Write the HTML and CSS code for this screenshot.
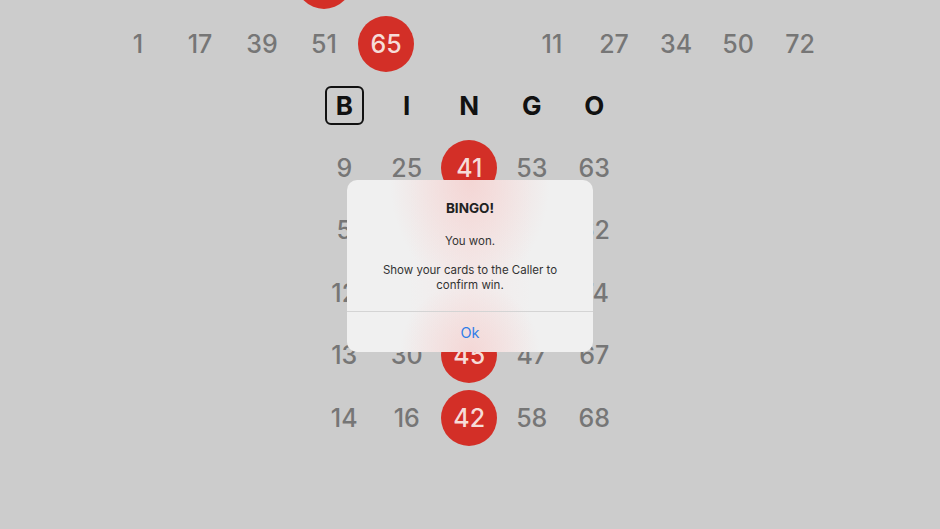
FILE: index.html
```html
<!DOCTYPE html>
<html>
	<head>
		<meta http-equiv="content-type" content="text/html;charset=UTF-8" />
		<link rel="stylesheet" href="styles.css">
	</head>

	<body>
		<div class="screen">
			<div class="calls">
				<div class="callRow prev">
					<div class="group">
						<span class="cell"></span>
						<span class="cell"></span>
						<span class="cell"></span>
						<span class="cell"><span class="ball"></span></span>
						<span class="cell"></span>
					</div>
				</div>
				<div class="callRow">
					<div class="group">
						<span class="cell">1</span>
						<span class="cell">17</span>
						<span class="cell">39</span>
						<span class="cell">51</span>
						<span class="cell"><span class="ball">65</span></span>
					</div>
					<div class="group right">
						<span class="cell">11</span>
						<span class="cell">27</span>
						<span class="cell">34</span>
						<span class="cell">50</span>
						<span class="cell">72</span>
					</div>
				</div>
			</div>

			<div class="card">
				<div class="row head">
					<span class="cell"><span class="boxed">B</span></span>
					<span class="cell">I</span>
					<span class="cell">N</span>
					<span class="cell">G</span>
					<span class="cell">O</span>
				</div>
				<div class="row">
					<span class="cell">9</span>
					<span class="cell">25</span>
					<span class="cell"><span class="ball">41</span></span>
					<span class="cell">53</span>
					<span class="cell">63</span>
				</div>
				<div class="row">
					<span class="cell">5</span>
					<span class="cell">19</span>
					<span class="cell"></span>
					<span class="cell">48</span>
					<span class="cell">62</span>
				</div>
				<div class="row">
					<span class="cell">12</span>
					<span class="cell">23</span>
					<span class="cell"></span>
					<span class="cell">55</span>
					<span class="cell">74</span>
				</div>
				<div class="row">
					<span class="cell">13</span>
					<span class="cell">30</span>
					<span class="cell"><span class="ball">45</span></span>
					<span class="cell">47</span>
					<span class="cell">67</span>
				</div>
				<div class="row">
					<span class="cell">14</span>
					<span class="cell">16</span>
					<span class="cell"><span class="ball">42</span></span>
					<span class="cell">58</span>
					<span class="cell">68</span>
				</div>
			</div>

			<div class="alert">
				<div class="alertBody">
					<div class="alertTitle">BINGO!</div>
					<div class="alertMsg">You won.</div>
					<div class="alertMsg more">Show your cards to the Caller to<br>confirm win.</div>
				</div>
				<div class="alertBtn">Ok</div>
			</div>
		</div>
	</body>
</html>
```

FILE: styles.css
```css
body{
	margin: 0;
	font-family: Inter, "Liberation Sans", sans-serif;
}
.screen{
	position: relative;
	width: 940px;
	height: 529px;
	overflow: hidden;
	background-color: #cccccc;
}
.calls{
	display: flex;
	flex-direction: column;
	gap: 7px;
	margin-top: -47px;
}
.callRow{
	display: flex;
	flex-direction: row;
	padding-left: 107px;
}
.group{
	display: flex;
	flex-direction: row;
}
.group.right{
	margin-left: 104px;
}
.callRow .cell{
	width: 62px;
	height: 56px;
}
.cell{
	display: flex;
	justify-content: center;
	align-items: center;
	font-size: 25px;
	font-weight: 500;
	color: #767676;
}
.ball{
	width: 56px;
	height: 56px;
	border-radius: 50%;
	background-color: #d32f27;
	color: #f6dcd8;
	display: flex;
	justify-content: center;
	align-items: center;
}
.card{
	margin-top: 2px;
	margin-left: 313px;
	display: flex;
	flex-direction: column;
}
.row{
	display: flex;
	flex-direction: row;
	height: 62.5px;
}
.row .cell{
	width: 62.5px;
}
.head .cell{
	color: #111111;
	font-weight: 700;
	font-size: 26px;
}
.boxed{
	width: 35px;
	height: 35px;
	border: solid 2.5px #111111;
	border-radius: 6px;
	display: flex;
	justify-content: center;
	align-items: center;
}
.alert{
	position: absolute;
	left: 347px;
	top: 180px;
	width: 246px;
	height: 172px;
	border-radius: 10px;
	overflow: hidden;
	background:
		radial-gradient(ellipse 80px 110px at 50% 0, rgba(244,205,203,0.7), rgba(244,205,203,0)),
		radial-gradient(ellipse 70px 70px at 50% 100%, rgba(244,205,203,0.65), rgba(244,205,203,0)),
		linear-gradient(90deg, rgba(240,240,240,0) 25%, rgba(245,232,232,0.7) 50%, rgba(240,240,240,0) 75%),
		#f0f0f0;
	display: flex;
	flex-direction: column;
	color: #222222;
	text-align: center;
}
.alertBody{
	height: 132px;
	box-sizing: border-box;
	padding-top: 19px;
	border-bottom: solid 1px #d4d4d4;
}
.alertTitle{
	font-size: 13.5px;
	line-height: 18px;
	font-weight: 700;
}
.alertMsg{
	font-size: 11.5px;
	line-height: 15px;
	margin-top: 17px;
	color: #333333;
}
.alertMsg.more{
	margin-top: 14px;
}
.alertBtn{
	flex-grow: 1;
	display: flex;
	justify-content: center;
	align-items: center;
	font-size: 14.5px;
	color: #2f7de8;
}
```
